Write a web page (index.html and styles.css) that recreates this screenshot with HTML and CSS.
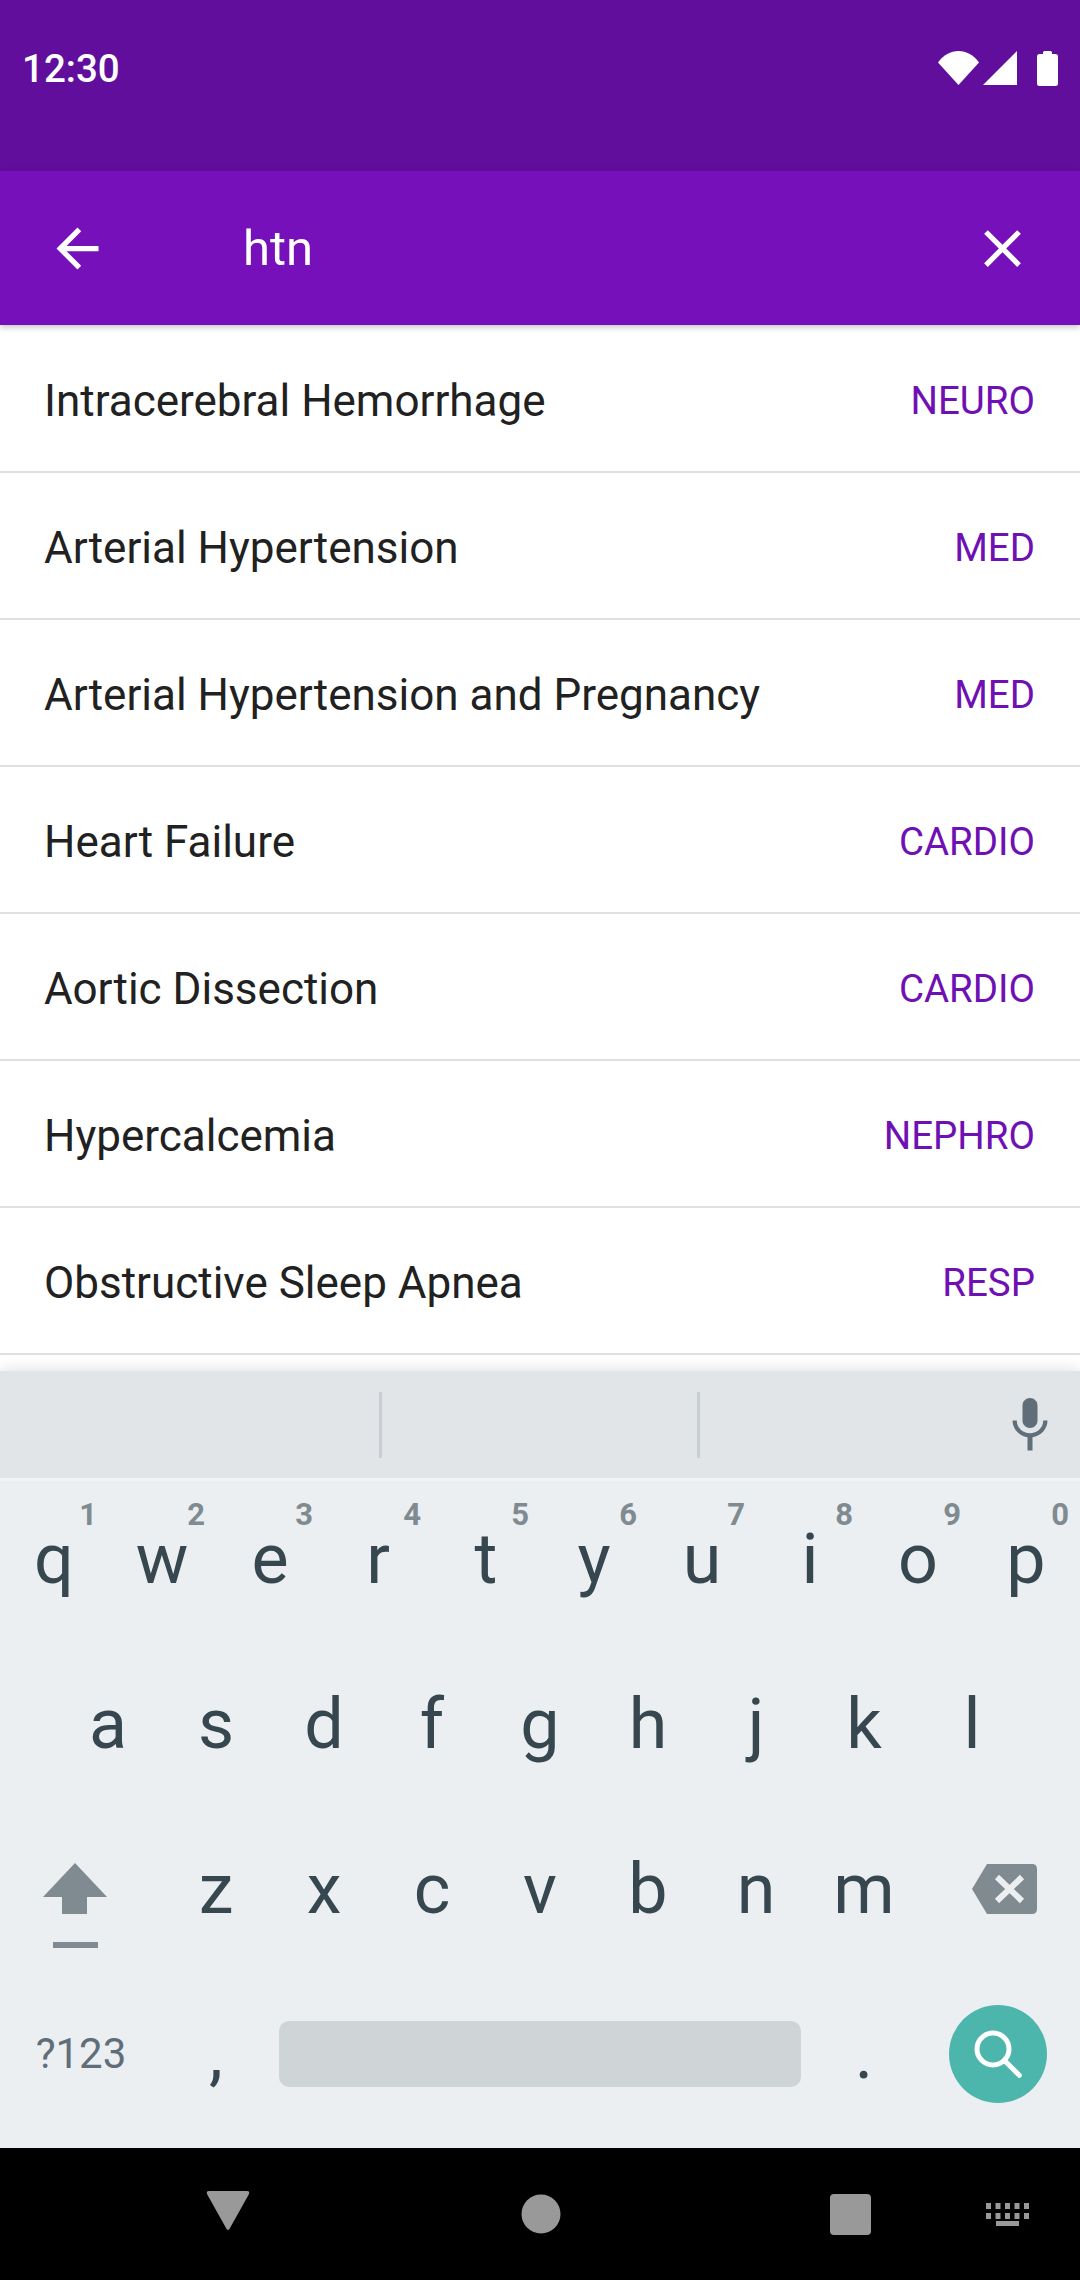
FILE: index.html
```html
<!DOCTYPE html>
<html lang="en">
<head>
    <meta charset="UTF-8">
    <meta name="viewport" content="width=device-width, initial-scale=1.0">
    <title>Search</title>
    <link rel="stylesheet" href="styles.css">
</head>
<body>

<div class="phone">
    <div class="status-bar">
        <span class="time">12:30</span>
        <div class="status-icons">
            <svg class="icon-wifi" viewBox="0 0 41 34"><path d="M0 11.500C5.500 4 12.500 0 20.500 0S35.500 4 41 11.500L20.500 34Z"/></svg>
            <svg class="icon-signal" viewBox="0 0 34 34"><path d="M34 0V34H0Z"/></svg>
            <svg class="icon-battery" viewBox="0 0 21 35"><path d="M6 3V1.500Q6 0 7.500 0H13.500Q15 0 15 1.500V3H18.500Q21 3 21 5.500V32.500Q21 35 18.500 35H2.500Q0 35 0 32.500V5.500Q0 3 2.500 3Z"/></svg>
        </div>
    </div>

    <header class="search-bar">
        <svg class="bar-icon" viewBox="0 0 24 24"><path d="M20 11H7.830l5.590-5.590L12 4l-8 8 8 8 1.410-1.410L7.830 13H20v-2z"/></svg>
        <span class="query">htn</span>
        <svg class="bar-icon" viewBox="0 0 24 24"><path d="M19 6.410L17.590 5 12 10.590 6.410 5 5 6.410 10.590 12 5 17.590 6.410 19 12 13.410 17.590 19 19 17.590 13.410 12z"/></svg>
    </header>

    <div class="results">
        <div class="result"><span class="name">Intracerebral Hemorrhage</span><span class="tag">NEURO</span></div>
        <div class="result"><span class="name">Arterial Hypertension</span><span class="tag">MED</span></div>
        <div class="result"><span class="name">Arterial Hypertension and Pregnancy</span><span class="tag">MED</span></div>
        <div class="result"><span class="name">Heart Failure</span><span class="tag">CARDIO</span></div>
        <div class="result"><span class="name">Aortic Dissection</span><span class="tag">CARDIO</span></div>
        <div class="result"><span class="name">Hypercalcemia</span><span class="tag">NEPHRO</span></div>
        <div class="result"><span class="name">Obstructive Sleep Apnea</span><span class="tag">RESP</span></div>
    </div>

    <div class="suggestions">
        <div class="suggestion"></div>
        <div class="suggestion"></div>
        <div class="suggestion mic">
            <svg class="icon-mic" viewBox="0 0 24 24"><path d="M12 14c1.660 0 3-1.340 3-3V5c0-1.660-1.340-3-3-3S9 3.340 9 5v6c0 1.660 1.340 3 3 3z"/><path d="M17.300 11c0 3-2.540 5.100-5.300 5.100S6.700 14 6.700 11H5c0 3.410 2.720 6.230 6 6.720V23h2v-5.280c3.280-.48 6-3.300 6-6.720h-1.700z"/></svg>
        </div>
    </div>

    <div class="keyboard">
        <div class="key-row">
            <div class="key">q<span class="hint">1</span></div>
            <div class="key">w<span class="hint">2</span></div>
            <div class="key">e<span class="hint">3</span></div>
            <div class="key">r<span class="hint">4</span></div>
            <div class="key">t<span class="hint">5</span></div>
            <div class="key">y<span class="hint">6</span></div>
            <div class="key">u<span class="hint">7</span></div>
            <div class="key">i<span class="hint">8</span></div>
            <div class="key">o<span class="hint">9</span></div>
            <div class="key">p<span class="hint">0</span></div>
        </div>
        <div class="key-row">
            <div class="key">a</div>
            <div class="key">s</div>
            <div class="key">d</div>
            <div class="key">f</div>
            <div class="key">g</div>
            <div class="key">h</div>
            <div class="key">j</div>
            <div class="key">k</div>
            <div class="key">l</div>
        </div>
        <div class="key-row">
            <div class="key wide">
                <svg class="icon-shift" viewBox="0 0 64 86"><path d="M32 0L64 34H44V51H19V34H0Z"/><rect x="10" y="79" width="45" height="6"/></svg>
            </div>
            <div class="key">z</div>
            <div class="key">x</div>
            <div class="key">c</div>
            <div class="key">v</div>
            <div class="key">b</div>
            <div class="key">n</div>
            <div class="key">m</div>
            <div class="key wide">
                <svg class="icon-backspace" viewBox="0 0 65 50"><path d="M15 0H60Q65 0 65 5V45Q65 50 60 50H15L0 25Z"/><path class="cross" d="M25 13L50 37M50 13L25 37"/></svg>
            </div>
        </div>
        <div class="key-row">
            <div class="key wide symbols">?123</div>
            <div class="key punct">,</div>
            <div class="key space"><div class="space-bar"></div></div>
            <div class="key punct">.</div>
            <div class="key wide">
                <div class="search-key">
                    <svg class="icon-search" viewBox="0 0 48 48"><circle cx="19" cy="19" r="16"/><path d="M30 30L47 47"/></svg>
                </div>
            </div>
        </div>
    </div>

    <div class="nav-bar">
        <svg class="nav-back" viewBox="0 0 44 48"><path d="M3 5H41Q44 5 43 8L24 42Q22 46 20 42L1 8Q0 5 3 5Z"/></svg>
        <svg class="nav-home" viewBox="0 0 40 40"><circle cx="20" cy="20" r="19.500"/></svg>
        <svg class="nav-recent" viewBox="0 0 41 41"><rect width="41" height="41" rx="4"/></svg>
        <svg class="nav-keyboard" viewBox="0 0 43 23">
            <path d="M0 0h5v6H0zM9.500 0h5v6h-5zM19 0h5v6h-5zM28.500 0h5v6h-5zM38 0h5v6h-5zM0 10h5v6H0zM9.500 10h5v6h-5zM19 10h5v6h-5zM28.500 10h5v6h-5zM38 10h5v6h-5zM10 18h23v5H10z"/>
        </svg>
    </div>
</div>

</body>
</html>
```

FILE: styles.css
```css
body {
    margin: 0;
    font-family: 'Roboto', sans-serif;
    background: white;
}
svg {
    display: block;
}
.phone {
    width: 1080px;
    height: 2280px;
    display: flex;
    flex-direction: column;
    overflow: hidden;
}

/* status bar */
.status-bar {
    height: 171px;
    box-sizing: border-box;
    padding: 0 22px 35px 22px;
    background-color: #620e9d;
    color: white;
    display: flex;
    align-items: center;
    justify-content: space-between;
}
.time {
    font-size: 38.500px;
    font-weight: 500;
}
.status-icons {
    display: flex;
    align-items: center;
    fill: white;
}
.icon-wifi {
    width: 41px;
    height: 34px;
}
.icon-signal {
    width: 34px;
    height: 34px;
    margin-left: 4px;
}
.icon-battery {
    width: 21px;
    height: 35px;
    margin-left: 20px;
}

/* search bar */
.search-bar {
    height: 154px;
    flex-shrink: 0;
    box-sizing: border-box;
    padding: 0 46px;
    background-color: #7610bb;
    color: white;
    fill: white;
    display: flex;
    align-items: center;
    box-shadow: 0 2px 6px rgba(0, 0, 0, 0.25);
    position: relative;
}
.bar-icon {
    width: 63px;
    height: 63px;
}
.query {
    flex: 1;
    margin-left: 134px;
    font-size: 49px;
}

/* results */
.results {
    height: 1029px;
    flex-shrink: 0;
    padding-top: 1px;
    box-sizing: border-box;
    background: white;
}
.result {
    height: 147px;
    box-sizing: border-box;
    padding: 4px 45px 0 44px;
    border-bottom: 2px solid #e0e0e0;
    display: flex;
    align-items: center;
    justify-content: space-between;
}
.name {
    font-size: 44px;
    color: #212121;
}
.tag {
    font-size: 38.500px;
    color: #6f10b4;
}

/* keyboard */
.suggestions {
    height: 110px;
    flex-shrink: 0;
    margin-top: 17px;
    box-sizing: border-box;
    padding: 21px 0 20px;
    background-color: #e2e5e8;
    border-bottom: 3px solid #f1f3f5;
    box-shadow: 0 -3px 12px rgba(0, 0, 0, 0.1);
    display: flex;
}
.suggestion {
    width: 318px;
    border-right: 3px solid #c9ced2;
    box-sizing: border-box;
}
.suggestion:first-child {
    width: 382px;
}
.mic {
    flex: 1;
    border-right: none;
    display: flex;
    justify-content: flex-end;
    align-items: center;
    padding: 0 20px 5px 0;
}
.icon-mic {
    width: 60px;
    height: 60px;
    fill: #5f6e79;
}
.keyboard {
    height: 667px;
    flex-shrink: 0;
    background-color: #eceff1;
    color: #37474f;
    display: flex;
    flex-direction: column;
}
.key-row {
    height: 165px;
    display: flex;
    justify-content: center;
}
.key {
    width: 108px;
    flex-shrink: 0;
    box-sizing: border-box;
    padding-bottom: 10px;
    position: relative;
    display: flex;
    align-items: center;
    justify-content: center;
    font-size: 70px;
    line-height: 1;
}
.key.wide {
    width: 162px;
}
.hint {
    position: absolute;
    top: 18px;
    right: 11px;
    font-size: 31px;
    font-weight: 700;
    color: #7f8b90;
}
.key.symbols {
    font-size: 42px;
    color: #5f6e79;
}
.key.space {
    width: 540px;
}
.space-bar {
    width: 522px;
    height: 66px;
    border-radius: 10px;
    background-color: #cfd4d7;
}
.icon-shift {
    width: 64px;
    height: 86px;
    margin: 35px 12px 0 0;
    fill: #7f8b90;
}
.icon-backspace {
    width: 65px;
    height: 50px;
    margin-left: 11px;
    fill: #7f8b90;
}
.cross {
    fill: none;
    stroke: #eceff1;
    stroke-width: 6;
}
.search-key {
    width: 98px;
    height: 98px;
    margin-right: 2px;
    border-radius: 50%;
    background-color: #4db6ac;
    display: flex;
    align-items: center;
    justify-content: center;
}
.icon-search {
    width: 48px;
    height: 48px;
    fill: none;
    stroke: white;
    stroke-width: 5;
}

/* navigation bar */
.nav-bar {
    flex: 1;
    padding-left: 206px;
    background: black;
    fill: #999;
    display: flex;
    align-items: center;
}
.nav-back {
    width: 44px;
    height: 48px;
    margin-bottom: 8px;
}
.nav-home {
    width: 40px;
    height: 40px;
    margin-left: 271px;
}
.nav-recent {
    width: 41px;
    height: 41px;
    margin-left: 269px;
}
.nav-keyboard {
    width: 43px;
    height: 23px;
    margin-left: 115px;
}
```
